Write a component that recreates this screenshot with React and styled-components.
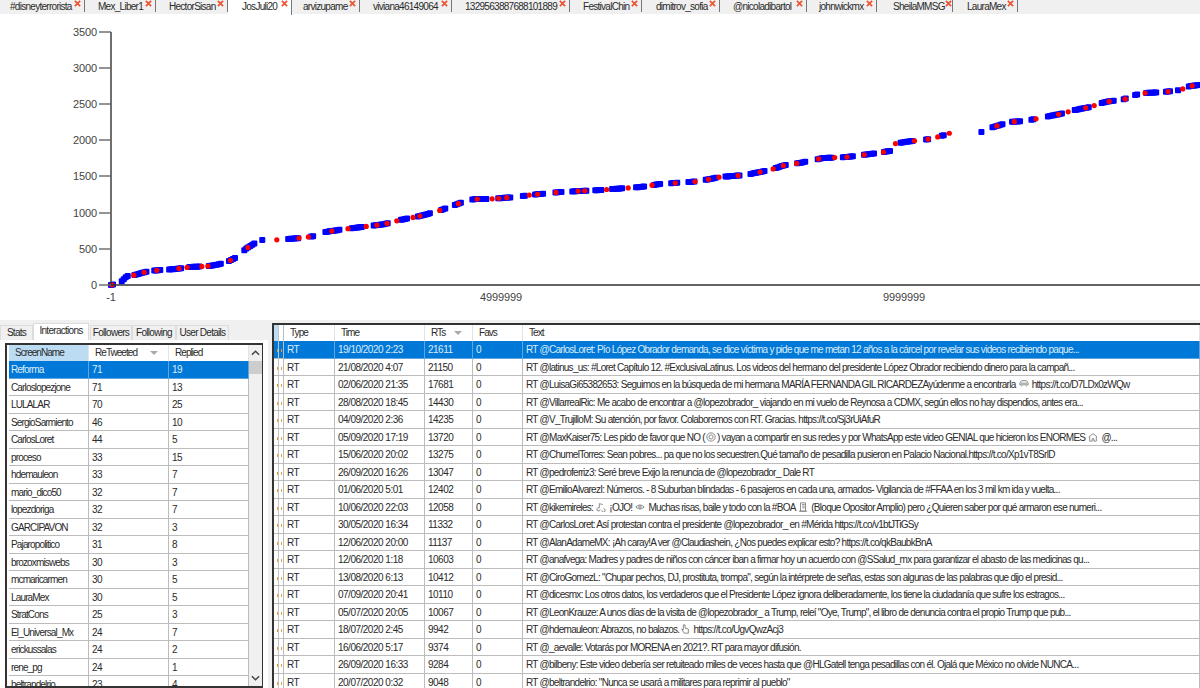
import React from 'react';
import styled, { createGlobalStyle } from 'styled-components';

const GlobalStyle = createGlobalStyle`
    html, body { margin: 0; padding: 0; background: #fff; }
    * { box-sizing: border-box; }
`;

const TABS = [
    ['#disneyterrorista', 85, 10], ['Mex_Liber1', 71, 13], ['HectorSisan', 72, 13], ['JosJuli20', 64, 14],
    ['arvizupame', 68, 11], ['viviana46149064', 92, 13], ['1329563887688101889', 118, 13], ['FestivalChin', 72, 13],
    ['dimitrov_sofia', 78, 14], ['@nicoladibartol', 87, 13], ['johnwickmx', 70, 12], ['SheilaMMSG', 76, 16], ['LauraMex', 65, 14],
];
const SIDE_TABS = [['Stats', 33], ['Interactions', 56], ['Followers', 42], ['Following', 44], ['User Details', 53]];

const USERS = [
    ['Reforma', 71, 19], ['Carloslopezjone', 71, 13], ['LULALAR', 70, 25], ['SergioSarmiento', 46, 10],
    ['CarlosLoret', 44, 5], ['proceso', 33, 15], ['hdemauleon', 33, 7], ['mario_dico50', 32, 7],
    ['lopezdoriga', 32, 7], ['GARCIPAVON', 32, 3], ['Pajaropolitico', 31, 8], ['brozoxmiswebs', 30, 3],
    ['mcmaricarmen', 30, 5], ['LauraMex', 30, 5], ['StratCons', 25, 3], ['El_Universal_Mx', 24, 7],
    ['erickussalas', 24, 2], ['rene_pg', 24, 1], ['beltrandelrio', 23, 4],
];

const TWEETS = [
    ['19/10/2020 2:23', 21611, 'RT @CarlosLoret: Pío López Obrador demanda, se dice víctima y pide que me metan 12 años a la cárcel por revelar sus videos recibiendo paque...'],
    ['21/08/2020 4:07', 21150, 'RT @latinus_us: #Loret Capítulo 12. #ExclusivaLatinus. Los videos del hermano del presidente López Obrador recibiendo dinero para la campañ...'],
    ['02/06/2020 21:35', 17681, 'RT @LuisaGi65382653: Seguimos en la búsqueda de mi hermana MARÍA FERNANDA GIL RICARDEZAyúdenme a encontrarla {car} https://t.co/D7LDx0zWQw'],
    ['28/08/2020 18:45', 14430, 'RT @VillarrealRic: Me acabo de encontrar a @lopezobrador_ viajando en mi vuelo de Reynosa a CDMX, según ellos no hay dispendios, antes era...'],
    ['04/09/2020 2:36', 14235, 'RT @V_TrujilloM: Su atención, por favor. Colaboremos con RT. Gracias. https://t.co/Sj3rUiAfuR'],
    ['05/09/2020 17:19', 13720, 'RT @MaxKaiser75: Les pido de favor que NO ({circle}) vayan a compartir en sus redes y por WhatsApp este video GENIAL que hicieron los ENORMES {house} @...'],
    ['15/06/2020 20:02', 13275, 'RT @ChumelTorres: Sean pobres... pa que no los secuestren.Qué tamaño de pesadilla pusieron en Palacio Nacional.https://t.co/Xp1vT8SrlD'],
    ['26/09/2020 16:26', 13047, 'RT @pedroferriz3: Seré breve Exijo la renuncia de @lopezobrador_ Dale RT'],
    ['01/06/2020 5:01', 12402, 'RT @EmilioAlvarezI: Números. - 8 Suburban blindadas - 6 pasajeros en cada una, armados- Vigilancia de #FFAA en los 3 mil km ida y vuelta...'],
    ['10/06/2020 22:03', 12058, 'RT @kikemireles: {music} ¡OJO! {eye} Muchas risas, baile y todo con la #BOA {doc} (Bloque Opositor Amplio) pero ¿Quieren saber por qué armaron ese numeri...'],
    ['30/05/2020 16:34', 11332, 'RT @CarlosLoret: Así protestan contra el presidente @lopezobrador_ en #Mérida https://t.co/v1btJTiGSy'],
    ['12/06/2020 20:00', 11137, 'RT @AlanAdameMX: ¡Ah caray!A ver @Claudiashein, ¿Nos puedes explicar esto? https://t.co/qkBaubkBnA'],
    ['12/06/2020 1:18', 10603, 'RT @anafvega: Madres y padres de niños con cáncer iban a firmar hoy un acuerdo con @SSalud_mx para garantizar el abasto de las medicinas qu...'],
    ['13/08/2020 6:13', 10412, 'RT @CiroGomezL: "Chupar pechos, DJ, prostituta, trompa", según la intérprete de señas, estas son algunas de las palabras que dijo el presid...'],
    ['07/09/2020 20:41', 10110, 'RT @dicesmx: Los otros datos, los verdaderos que el Presidente López ignora deliberadamente, los tiene la ciudadanía que sufre los estragos...'],
    ['05/07/2020 20:05', 10067, 'RT @LeonKrauze: A unos días de la visita de @lopezobrador_ a Trump, releí "Oye, Trump", el libro de denuncia contra el propio Trump que pub...'],
    ['18/07/2020 2:45', 9942, 'RT @hdemauleon: Abrazos, no balazos.{hand} https://t.co/UgvQwzAcj3'],
    ['16/06/2020 5:17', 9374, 'RT @_aevalle: Votarás por MORENA en 2021?. RT para mayor difusión.'],
    ['26/09/2020 16:33', 9284, 'RT @bilbeny: Este video debería ser retuiteado miles de veces hasta que @HLGatell tenga pesadillas con él. Ojalá que México no olvide NUNCA...'],
    ['20/07/2020 0:32', 9048, 'RT @beltrandelrio: "Nunca se usará a militares para reprimir al pueblo"'],
];

const CURVE = [
    [111, 285], [120, 283], [125, 278], [127, 276], [135, 275], [145, 272], [155, 270.5], [175, 269], [190, 267], [210, 266],
    [225, 263], [235, 258], [240, 254], [247, 248], [255, 243], [262, 240], [275, 240], [300, 238], [315, 236], [325, 232],
    [345, 229], [370, 226], [385, 224], [400, 220], [420, 216], [435, 212], [450, 207], [465, 201], [475, 199], [490, 199],
    [515, 197], [530, 195], [560, 192], [600, 190], [640, 187], [660, 184], [690, 182], [700, 181], [720, 177], [745, 175],
    [770, 170], [785, 165], [800, 163], [823, 158], [847, 157], [870, 154], [890, 151], [892, 147], [893, 144], [905, 142],
    [930, 139], [945, 135], [950, 133], [965, 133], [982, 132], [990, 128], [1000, 125], [1010, 122], [1025, 121], [1040, 118],
    [1060, 114], [1075, 110], [1090, 107], [1105, 102], [1125, 99], [1130, 96], [1145, 93], [1165, 92], [1180, 90], [1190, 86], [1200, 85],
];
const GAPS = [[263, 275], [284, 288], [951, 961], [967, 981], [1171, 1176]];

const curveY = x => {
    for (let i = 1; i < CURVE.length; i++) {
        if (x <= CURVE[i][0]) {
            const [x0, y0] = CURVE[i - 1];
            const [x1, y1] = CURVE[i];
            return y0 + (y1 - y0) * (x - x0) / (x1 - x0);
        }
    }
    return 85;
};

// small seeded generator so the dots come out the same on every load
const buildDots = () => {
    let seed = 7;
    const rnd = () => {
        seed = (seed * 16807) % 2147483647;
        return seed / 2147483647;
    };
    const blue = [];
    const red = [];
    let x = 111;
    while (x < 1200) {
        const run = 2 + rnd() * 14;
        const end = Math.min(x + run, 1203);
        for (let p = x; p < end; p += 2) {
            if (!GAPS.some(([a, b]) => p > a && p < b)) blue.push([p, curveY(p)]);
        }
        x = end + (x < 260 ? 6 + rnd() * 3 : 8 + rnd() * 5);
    }
    for (let p = 112; p < 1200; p += 6 + rnd() * 18) {
        if (!GAPS.some(([a, b]) => p > a && p < b)) red.push([p, curveY(p)]);
    }
    return { blue, red };
};

const Y_TICKS = [[3500, 32], [3000, 68], [2500, 104], [2000, 140], [1500, 176], [1000, 213], [500, 249], [0, 285]];
const X_LABELS = [['-1', 111], ['4999999', 501], ['9999999', 904]];

const Chart = () => {
    const { blue, red } = buildDots();
    return (
        <ChartSvg viewBox="0 14 1200 306" width="1200" height="306">
            {blue.map(([x, y], i) => <rect key={i} x={x - 3} y={y - 3} width="6" height="6" rx="1" fill="#0000ff" />)}
            {red.map(([x, y], i) => <circle key={i} cx={x} cy={y} r="2.6" fill="#ff0000" />)}
            <path d="M111 32V285H1200" fill="none" stroke="#333" strokeWidth="1.4" />
            {Y_TICKS.map(([v, y]) => (
                <g key={v}>
                    <line x1="99" x2="111" y1={y} y2={y} stroke="#666" strokeWidth="1.4" />
                    <AxisLabel x="97" y={y + 4} textAnchor="end">{v}</AxisLabel>
                </g>
            ))}
            {X_LABELS.map(([v, x]) => <AxisLabel key={v} x={x} y="301" textAnchor="middle">{v}</AxisLabel>)}
        </ChartSvg>
    );
};

const Emoji = ({ kind }) => {
    const shapes = {
        car: <path d="M1 7V5l2-3h6l2 3v2zM3 8v1M9 8v1M2 5h8" />,
        circle: <><circle cx="6" cy="6" r="5" /><circle cx="6" cy="6" r="2.5" /></>,
        house: <path d="M1 6l5-4 5 4M2 6v5h3V8h2v3h3V6" />,
        music: <path d="M5 9a2 2 0 1 1-1-2V2l4 1M9 8a2 2 0 1 1-2 2" />,
        eye: <><path d="M1 6q5-5 10 0q-5 5-10 0z" /><circle cx="6" cy="6" r="1.5" /></>,
        doc: <path d="M3 1h6v10H3zM5 3h3M5 5h3M5 7h3M1 11h10" />,
        hand: <path d="M4 1v6L2 6l3 5h5V6L6 5V1z" />,
    };
    return <EmojiSvg viewBox="0 0 12 12">{shapes[kind]}</EmojiSvg>;
};

const withEmoji = text => text.split(/\{(\w+)\}/).map((part, i) => (
    i % 2 ? <Emoji key={i} kind={part} /> : <span key={i}>{part}</span>
));

const CloseIcon = () => (
    <CloseSvg viewBox="0 0 8 8">
        <path d="M1 1l6 6M7 1L1 7" />
    </CloseSvg>
);

function App() {
    return (
        <Page>
            <GlobalStyle />
            <TabBar>
                {TABS.map(([name, width, pad]) => (
                    <Tab key={name} $width={width} $pad={pad} $active={name === 'JosJuli20'}>
                        <TabName>{name}</TabName>
                        <CloseIcon />
                    </Tab>
                ))}
            </TabBar>
            <Chart />
            <Bottom>
                <LeftSide>
                    <SideTabs>
                        {SIDE_TABS.map(([name, width]) => (
                            <SideTab key={name} $width={width} $active={name === 'Interactions'}>{name}</SideTab>
                        ))}
                    </SideTabs>
                    <SidePanel>
                        <UsersGrid>
                            <UsersTable>
                                <HeadRow>
                                    <HeadCell $width={80} $lit>ScreenName</HeadCell>
                                    <HeadCell $width={80}>ReTweeted<SortMark /></HeadCell>
                                    <HeadCell $width={80}>Replied</HeadCell>
                                </HeadRow>
                                {USERS.map(([name, rts, replied], i) => (
                                    <Row key={name} $selected={i === 0}>
                                        <Cell $width={80} $pad={2} $spacing={-0.85} $selected={i === 0}>{name}</Cell>
                                        <Cell $width={80} $selected={i === 0}>{rts}</Cell>
                                        <Cell $width={80} $selected={i === 0}>{replied}</Cell>
                                    </Row>
                                ))}
                            </UsersTable>
                            <ScrollBar>
                                <ScrollArrow viewBox="0 0 10 6"><path d="M1 5l4-4 4 4" /></ScrollArrow>
                                <ScrollThumb />
                                <ScrollArrow viewBox="0 0 10 6"><path d="M1 1l4 4 4-4" /></ScrollArrow>
                            </ScrollBar>
                        </UsersGrid>
                    </SidePanel>
                </LeftSide>
                <TweetsGrid>
                    <HeadRow>
                        <RowHead $head />
                        <HeadCell $width={51}>Type</HeadCell>
                        <HeadCell $width={90}>Time</HeadCell>
                        <HeadCell $width={48}>RTs<SortMark /></HeadCell>
                        <HeadCell $width={50}>Favs</HeadCell>
                        <HeadCell $width={677}>Text</HeadCell>
                    </HeadRow>
                    {TWEETS.map(([time, rts, text], i) => (
                        <Row key={text} $selected={i === 0}>
                            <RowHead $selected={i === 0}><Speck $left={3} /><Speck $left={7} /></RowHead>
                            <Cell $width={51} $line={18} $selected={i === 0}>RT</Cell>
                            <Cell $width={90} $line={18} $selected={i === 0}>{time}</Cell>
                            <Cell $width={48} $line={18} $selected={i === 0}>{rts}</Cell>
                            <Cell $width={50} $line={18} $selected={i === 0}>0</Cell>
                            <Cell $width={677} $line={18} $spacing={-0.72} $selected={i === 0}>{withEmoji(text)}</Cell>
                        </Row>
                    ))}
                </TweetsGrid>
            </Bottom>
        </Page>
    );
}

export default App;

const Page = styled.div`
    width: 1200px;
    height: 688px;
    overflow: hidden;
    background: #fff;
    font-family: "Liberation Sans", Arial, sans-serif;
    font-size: 10px;
    letter-spacing: -0.72px;
    color: #2a2a2a;
`;

const TabBar = styled.div`
    display: flex;
    height: 14px;
    background: #f0f0f0;
`;

const Tab = styled.div`
    display: flex;
    align-items: flex-start;
    width: ${p => p.$width}px;
    height: ${p => p.$active ? 15 : 12}px;
    padding: 0 3px 0 ${p => p.$pad}px;
    background: ${p => p.$active ? '#fff' : 'transparent'};
    border-right: 1px solid #777;
`;

const TabName = styled.span`
    line-height: 13px;
    white-space: nowrap;
`;

const CloseSvg = styled.svg`
    width: 7px;
    height: 7px;
    margin: 0 0 0 auto;
    flex: none;
    fill: none;
    stroke: #ee5533;
    stroke-width: 2;
`;

const ChartSvg = styled.svg`
    display: block;
    letter-spacing: -0.1px;
`;

const AxisLabel = styled.text`
    font-size: 11px;
    fill: #444;
`;

const Bottom = styled.div`
    display: flex;
    height: 368px;
    background: #f0f0f0;
`;

const LeftSide = styled.div`
    width: 272px;
    flex: none;
    display: flex;
    flex-direction: column;
`;

const SideTabs = styled.div`
    display: flex;
    align-items: flex-end;
    height: 20px;
    padding-top: 3px;
`;

const SideTab = styled.div`
    width: ${p => p.$width}px;
    height: ${p => p.$active ? 17 : 15}px;
    text-align: center;
    line-height: 14px;
    background: ${p => p.$active ? '#fff' : '#f0f0f0'};
    border: 1px solid #dcdcdc;
    border-bottom: none;
    margin-right: ${p => p.$active ? 1 : 0}px;
    white-space: nowrap;
`;

const SidePanel = styled.div`
    flex: 1;
    margin-right: 4px;
    padding: 3px 5px 0;
    background: #fff;
    min-height: 0;
`;

const UsersGrid = styled.div`
    display: flex;
    height: 345px;
    background: #fff;
    border: 2px solid #333;
    border-right-width: 1px;
    overflow: hidden;
`;

const UsersTable = styled.div`
    width: 242px;
    flex: none;
    padding-left: 2px;
`;

const HeadRow = styled.div`
    display: flex;
    height: 16px;
    background: #fff;
`;

const HeadCell = styled.div`
    position: relative;
    flex: none;
    width: ${p => p.$width}px;
    padding-left: 6px;
    line-height: 16px;
    letter-spacing: -0.95px;
    background: ${p => p.$lit ? '#bcdcf4' : '#fff'};
    border-right: 1px solid #e3e3e3;
`;

const SortMark = styled.i`
    position: absolute;
    right: 10px;
    top: 6px;
    border: 4px solid transparent;
    border-top: 4px solid #aaa;
    border-bottom: none;
`;

const Row = styled.div`
    display: flex;
    height: 17.5px;
    background: ${p => p.$selected ? '#0078d7' : '#fff'};
`;

const Cell = styled.div`
    flex: none;
    width: ${p => p.$width}px;
    padding-left: ${p => p.$pad ?? 3}px;
    line-height: ${p => p.$line ?? 17}px;
    letter-spacing: ${p => p.$spacing ?? -0.5}px;
    white-space: nowrap;
    overflow: hidden;
    color: ${p => p.$selected ? '#dcecf8' : '#2a2a2a'};
    border-right: 1px solid ${p => p.$selected ? '#5fa6e0' : '#bcbcbc'};
    border-bottom: 1px solid ${p => p.$selected ? '#5fa6e0' : '#bcbcbc'};
`;

const ScrollBar = styled.div`
    flex: 1;
    display: flex;
    flex-direction: column;
    align-items: center;
    background: #f0f0f0;
`;

const ScrollArrow = styled.svg`
    width: 9px;
    height: 6px;
    margin: 5px 0;
    flex: none;
    fill: none;
    stroke: #444;
    stroke-width: 1.6;
`;

const ScrollThumb = styled.div`
    width: 100%;
    height: 13px;
    background: #cdcdcd;
    margin-bottom: auto;
`;

const TweetsGrid = styled.div`
    flex: 1;
    margin-top: 3px;
    height: 367px;
    overflow: hidden;
    background: #fff;
    border-top: 2px solid #333;
    border-left: 2px solid #333;
`;

const RowHead = styled.div`
    position: relative;
    flex: none;
    width: 10px;
    background: ${p => p.$selected ? '#0078d7' : p.$head ? 'linear-gradient(to right, #bcdcf4 5px, #fff 5px)' : '#fff'};
    border-right: 1px solid #bcbcbc;
    border-bottom: ${p => p.$head ? 'none' : '1px solid #bcbcbc'};
    box-shadow: inset -4px 0 0 ${p => p.$selected ? '#0078d7' : '#fff'}, inset -5px 0 0 #c4c4c4;
`;

const Speck = styled.i`
    position: absolute;
    left: ${p => p.$left}px;
    top: 8px;
    width: 1px;
    height: 3px;
    background: #e0a040;
`;

const EmojiSvg = styled.svg`
    display: inline-block;
    width: 10px;
    height: 10px;
    margin: 0 1px;
    vertical-align: -1px;
    fill: none;
    stroke: #777;
    stroke-width: 1;
`;
